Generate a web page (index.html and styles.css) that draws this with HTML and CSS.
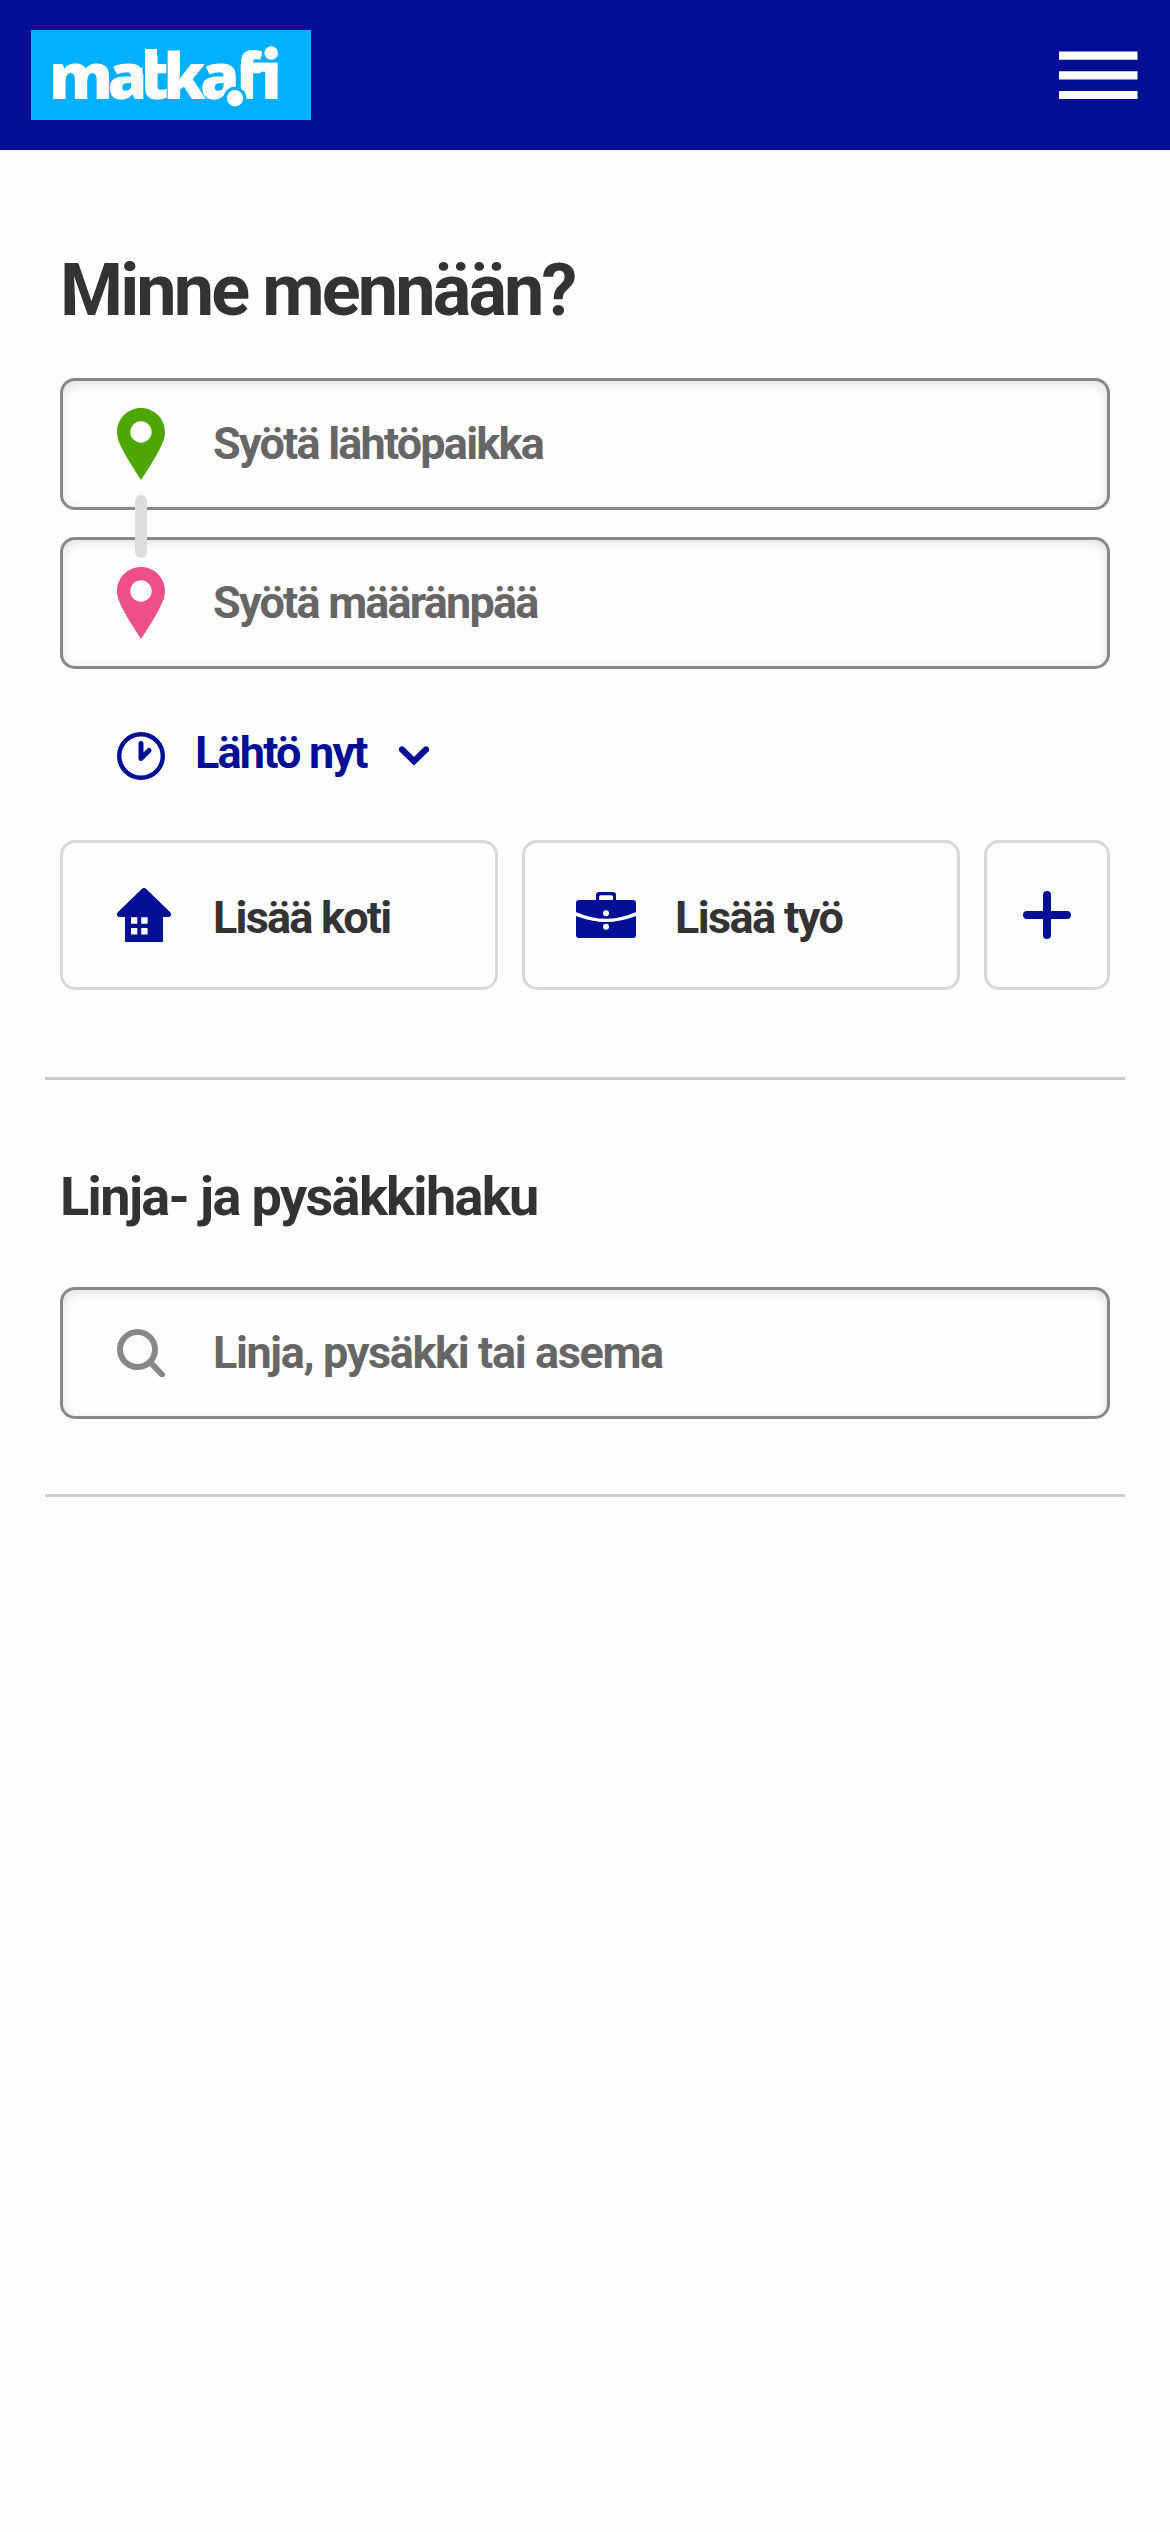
FILE: index.html
```html
<!DOCTYPE html>
<html lang="fi">
<head>
<meta charset="utf-8">
<title>Matka.fi</title>
<link rel="stylesheet" href="styles.css">
</head>
<body>
<header class="top-bar">
  <svg class="logo" viewBox="0 0 280 90" role="img">
    <rect class="logo-bg" width="280" height="90"/>
    <text class="logo-text" y="68.5" x="18 76.5 108.2 132.4 169 195 203.7 230">matka.fi</text>
    <path class="logo-bg" d="M111.500 17H114V44H111.500zM204.600 31H209.600V45H204.600z"/>
    <path class="logo-dot" d="M114 19H126V40H114zM222 32.500H246.400V41.800H222z"/>
    <circle class="logo-bg" cx="204" cy="68.300" r="11.500"/>
    <circle class="logo-dot" cx="204" cy="68.300" r="8.200"/>
    <circle class="logo-bg" cx="240.200" cy="23" r="9.500"/>
    <circle class="logo-dot" cx="240.200" cy="23" r="6.800"/>
  </svg>
  <svg class="menu" viewBox="0 0 79 48"><path d="M0 .4h78.500v8.300H0zM0 20.300h78.500v8.300H0zM0 40h78.500v8H0z"/></svg>
</header>
<main class="content">
  <section class="planner">
    <h1 class="title">Minne mennään?</h1>
    <div class="endpoints">
      <div class="field">
        <svg class="icon pin pin-from" viewBox="0 0 48 72"><path fill-rule="evenodd" d="M24 0C10.700 0 0 10.700 0 24C0 31 3 36 6 42.500C11 52 17.500 62 24 72C30.500 62 37 52 42 42.500C45 36 48 31 48 24C48 10.700 37.300 0 24 0ZM24 13.300a10.700 10.700 0 1 1 0 21.400a10.700 10.700 0 1 1 0-21.400Z"/></svg>
        <span class="placeholder">Syötä lähtöpaikka</span>
      </div>
      <div class="field">
        <svg class="icon pin pin-to" viewBox="0 0 48 72"><path fill-rule="evenodd" d="M24 0C10.700 0 0 10.700 0 24C0 31 3 36 6 42.500C11 52 17.500 62 24 72C30.500 62 37 52 42 42.500C45 36 48 31 48 24C48 10.700 37.300 0 24 0ZM24 13.300a10.700 10.700 0 1 1 0 21.400a10.700 10.700 0 1 1 0-21.400Z"/></svg>
        <span class="placeholder">Syötä määränpää</span>
      </div>
      <span class="connector"></span>
    </div>
    <div class="departure">
      <svg class="clock" viewBox="0 0 48 48"><circle cx="24" cy="24" r="21.800" stroke-width="4.400"/><path d="M24 11.500V26.500L32 18.500" stroke-width="5"/></svg>
      <span class="departure-text">Lähtö nyt</span>
      <svg class="chevron" viewBox="0 0 30 20"><path d="M3 3.500L15 15.200L27 3.500"/></svg>
    </div>
    <div class="shortcuts">
      <div class="shortcut">
        <svg class="home" viewBox="0 0 54 54"><path fill-rule="evenodd" d="M24.500 1.200Q27-1.200 29.500 1.200L53 24C55.200 26.500 53.500 29 51 29H46V54H8V29H3C.5 29-1.200 26.500 1 24ZM14 29.200V35.700H20.300V29.200ZM24.200 29.200V35.700H30.600V29.200ZM14 40V46.600H20.300V40ZM24.200 40V46.600H30.600V40Z"/></svg>
        <span class="shortcut-text">Lisää koti</span>
      </div>
      <div class="shortcut work-shortcut">
        <svg class="work" viewBox="0 0 60 46"><path fill-rule="evenodd" d="M20 8V3Q20 0 23 0H37Q40 0 40 3V8H57Q60 8 60 11V20.500Q30 36 0 20.500V11Q0 8 3 8ZM23.200 8H37V4.800Q37 3.200 35.500 3.200H24.700Q23.200 3.200 23.200 4.800Z"/><path d="M0 24Q30 35.500 60 24V43Q60 46 57 46H3Q0 46 0 43Z"/><path class="seam" d="M0 21.600Q30 35 60 21.600"/><circle class="clasp" cx="30" cy="21.300" r="3"/><circle class="clasp" cx="30" cy="34.800" r="3"/></svg>
        <span class="shortcut-text">Lisää työ</span>
      </div>
      <div class="shortcut add-shortcut">
        <svg class="plus" viewBox="0 0 48 48"><path d="M24 4V44M4 24H44"/></svg>
      </div>
    </div>
  </section>
  <section class="stop-search">
    <h2 class="subtitle">Linja- ja pysäkkihaku</h2>
    <div class="field">
      <svg class="search" viewBox="0 0 48 48"><circle cx="20.500" cy="20.500" r="17.500"/><path d="M33.500 33.500L45 45.500"/></svg>
      <span class="placeholder stop-text">Linja, pysäkki tai asema</span>
    </div>
  </section>
</main>
</body>
</html>
```
FILE: styles.css
```css
* { box-sizing: border-box; }
body { margin: 0; background: #fefefe; color: #333; font-family: Roboto, sans-serif; font-weight: 700; }
svg { display: block; flex: none; }
.top-bar { height: 150px; padding: 0 32px 0 31px; background: #000f94; display: flex; align-items: center; justify-content: space-between; }
.logo { width: 280px; height: 90px; }
.logo-bg { fill: #00afff; }
.logo-text { font-family: "Noto Sans", sans-serif; font-weight: 900; font-size: 64px; fill: #fff; }
.logo-dot { fill: #fff; }
.menu { width: 79px; height: 48px; fill: #fff; }
.content { padding: 0 45px; }
.planner, .stop-search { padding: 0 15px; border-bottom: 3px solid #ccc; }
.planner { height: 930px; padding-top: 96px; }
.title { margin: 0 0 42px; font-size: 72px; line-height: 90px; letter-spacing: -2.88px; }
.endpoints { position: relative; display: flex; flex-direction: column; gap: 27px; }
.field { height: 132px; padding-left: 54px; border: 3px solid #888; border-radius: 15px; background: #fefefe; box-shadow: inset 0 3px 12px rgba(0,0,0,.12); display: flex; align-items: center; }
.pin { width: 48px; height: 72px; }
.pin-from { fill: #4ea700; }
.pin-to { fill: #ed5088; }
.placeholder { margin-left: 48px; color: #666; font-size: 45px; line-height: 54px; letter-spacing: -1.8px; white-space: nowrap; }
.stop-text { letter-spacing: -1.37px; }
.connector { position: absolute; left: 75px; top: 117px; width: 12px; height: 63px; border-radius: 6px; background: #ddd; }
.departure { height: 48px; margin: 63px 0 60px; padding-left: 57px; display: flex; align-items: center; color: #000f94; }
.clock { width: 48px; height: 48px; fill: none; stroke: #000f94; stroke-linecap: round; stroke-linejoin: round; }
.departure-text { width: 173px; margin: 0 31px 7px 30px; font-size: 45px; line-height: 54px; letter-spacing: -1.8px; white-space: nowrap; }
.chevron { width: 30px; height: 20px; fill: none; stroke: #000f94; stroke-width: 6.200; stroke-linecap: round; }
.shortcuts { display: grid; grid-template-columns: 438px 438px 126px; gap: 24px; }
.shortcut { height: 150px; padding-left: 54px; border: 3px solid #d8d8d8; border-radius: 15px; background: #fefefe; display: flex; align-items: center; }
.work-shortcut { padding-left: 51px; }
.add-shortcut { padding: 0; justify-content: center; }
.home { width: 54px; height: 54px; fill: #000f94; }
.work { width: 60px; height: 46px; fill: #000f94; }
.seam { fill: none; stroke: #fff; stroke-width: 3.200; }
.clasp { fill: #fff; }
.plus { width: 48px; height: 48px; stroke: #000f94; stroke-width: 8; stroke-linecap: round; }
.shortcut-text { margin: 5px 0 0 42px; font-size: 45px; line-height: 54px; letter-spacing: -1.8px; white-space: nowrap; }
.work-shortcut .shortcut-text { margin-left: 39px; letter-spacing: -1.6px; }
.stop-search { height: 417px; padding-top: 87px; }
.subtitle { margin: 0 0 60px; font-size: 54px; line-height: 60px; letter-spacing: -1.63px; }
.search { width: 48px; height: 48px; fill: none; stroke: #888; stroke-width: 6; stroke-linecap: round; }
```
